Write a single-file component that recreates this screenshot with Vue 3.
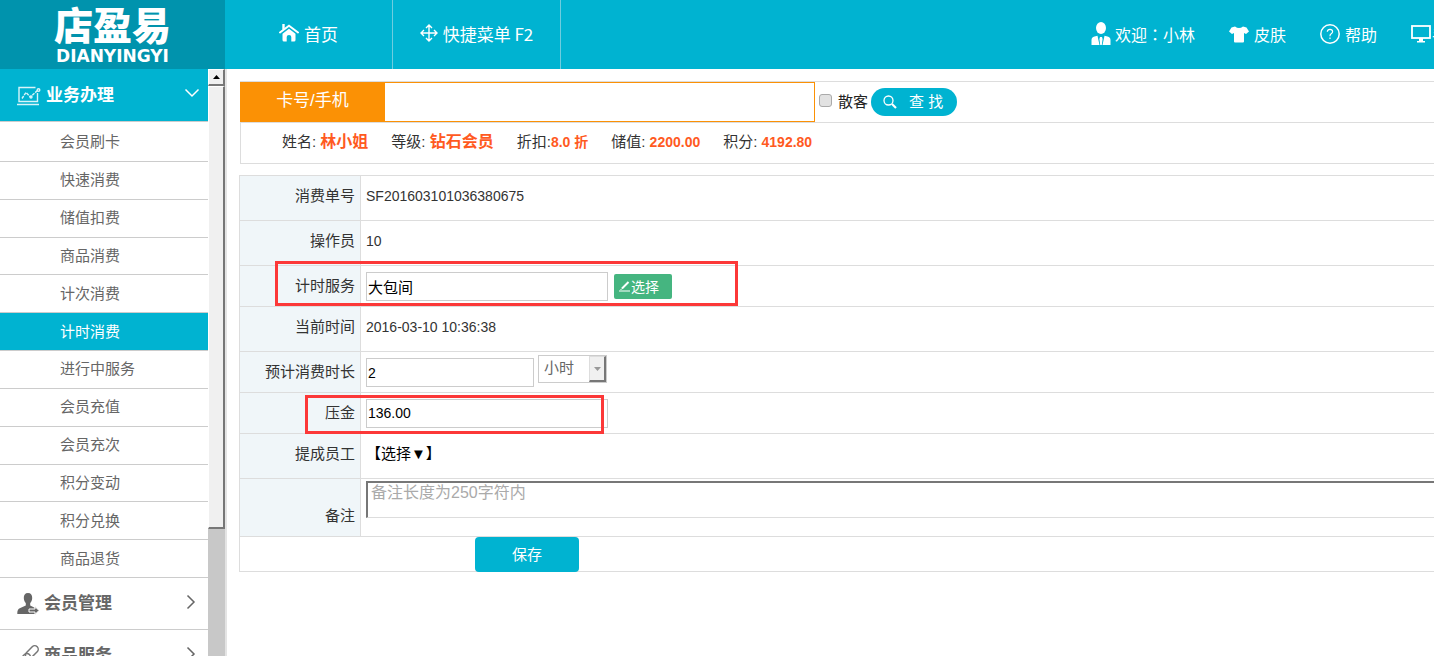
<script setup>
import { ref } from 'vue'

const menu = ['会员刷卡', '快速消费', '储值扣费', '商品消费', '计次消费', '计时消费', '进行中服务', '会员充值', '会员充次', '积分变动', '积分兑换', '商品退货']
const active = ref('计时消费')
const member = [
  { label: '姓名: ', value: '林小姐', name: true },
  { label: '等级: ', value: '钻石会员', name: true },
  { label: '折扣:', value: '8.0 折' },
  { label: '储值: ', value: '2200.00' },
  { label: '积分: ', value: '4192.80' },
]
const card = ref('')
const guest = ref(false)
const service = ref('大包间')
const duration = ref('2')
const unit = ref('小时')
const deposit = ref('136.00')
const remark = ref('')
</script>

<template>
  <div class="app">
    <header class="top">
      <a class="logo" href="#">
        <span class="logo-cn">店盈易</span>
        <span class="logo-en">DIANYINGYI</span>
      </a>
      <nav class="tabs">
        <a href="#" class="tab">
          <svg width="20" height="18" viewBox="0 0 20 18">
            <path d="M1 8.5 10 1.7l9 6.8" fill="none" stroke="#fff" stroke-width="2" stroke-linecap="round" />
            <path d="M3.3 0h2.4v4.2L3.3 6z" fill="#fff" />
            <path d="M3.5 9.7 10 4.8l6.5 4.9V16q0 1.5-1.5 1.5H12.300V13q0-2-2.300-2t-2.300 2V17.500H5q-1.500 0-1.500-1.500z" fill="#fff" />
          </svg>
          <span>首页</span>
        </a>
        <a href="#" class="tab">
          <svg width="18" height="18" viewBox="0 0 18 18" fill="none" stroke="#fff" stroke-width="1.400">
            <path d="M9 1v16M1 9h16M6 4l3-3 3 3M6 14l3 3 3-3M4 6 1 9l3 3M14 6l3 3-3 3" />
          </svg>
          <span>快捷菜单 F2</span>
        </a>
      </nav>
      <nav class="tools">
        <a href="#" class="tool user">
          <svg width="20" height="24" viewBox="0 0 20 24" fill="#fff">
            <ellipse cx="10" cy="6" rx="5" ry="6" />
            <path d="M0.500 23v-5q0-3 3-3.500l3-.7 2 9.200zM19.500 23v-5q0-3-3-3.500l-3-.7-2 9.200zM9 15h2l.6 2-.8 6H9.200l-.8-6z" />
          </svg>
          <span>欢迎<span class="colon">：</span>小林</span>
        </a>
        <a href="#" class="tool skin">
          <svg width="20" height="17" viewBox="0 0 20 17" fill="#fff">
            <path d="M6 .5q4 3 8 0l3.500 1L20 5.500 17 8l-2-1v8.500q0 1-1 1H6q-1 0-1-1V7L3 8 0 5.500l2.500-4z" />
          </svg>
          <span>皮肤</span>
        </a>
        <a href="#" class="tool help">
          <svg width="20" height="20" viewBox="0 0 20 20" fill="none" stroke="#fff">
            <circle cx="10" cy="10" r="9.200" stroke-width="1.500" />
            <path d="M7.300 7.800q.2-2.500 2.700-2.500t2.600 2.200q0 1.300-1.400 2.200T10 12.200M10 13.600v1.400" stroke-width="1.200" />
          </svg>
          <span>帮助</span>
        </a>
        <a href="#" class="tool screen">
          <svg width="20" height="18" viewBox="0 0 20 18">
            <rect x="1" y="1" width="18" height="12" fill="none" stroke="#fff" stroke-width="1.800" />
            <path d="M8 13h4v3h2v1.500H6V16h2z" fill="#fff" />
          </svg>
          <span>手机版</span>
        </a>
      </nav>
    </header>

    <div class="body">
      <aside class="side">
        <div class="side-content">
          <button class="group open" type="button">
            <svg class="laptop" width="24" height="20" viewBox="0 0 24 20" fill="none" stroke="#d8f4f9" stroke-width="1.400">
              <path d="M18.500 1.500H2v14h18.500V7M0 18.500h22" />
              <path d="m5 12.500 4-6 4.500 4.500L21 4" stroke-dasharray="3 1" />
              <circle cx="21.500" cy="4" r="1.300" /><circle cx="14" cy="11" r="1" />
            </svg>
            <span>业务办理</span>
            <svg class="arrow" width="16" height="10" viewBox="0 0 16 10"><path d="m1.500 1.500 6.500 6.500 6.500-6.500" fill="none" stroke="#fff" stroke-width="1.500" /></svg>
          </button>
          <ul class="items">
            <li v-for="m in menu" :key="m">
              <a href="#" :class="{ active: m === active }" @click.prevent="active = m">{{ m }}</a>
            </li>
          </ul>
          <button class="group" type="button">
            <svg width="22" height="22" viewBox="0 0 22 22" fill="#666">
              <path d="M11 0c3 0 4.300 2 4.200 5-.1 2.500-1 4-2 5v2.500l5 2.500v6H.3q-.3-5 3-6l5.500-2.500V10c-1-1-1.900-2.500-2-5C6.700 2 8 0 11 0z" />
              <path d="M12 16h6v-2.500l4 4-4 4V19h-6z" stroke="#fff" stroke-width="1" />
            </svg>
            <span>会员管理</span>
            <svg class="arrow" width="10" height="16" viewBox="0 0 10 16"><path d="m1.500 1.500 6.500 6.500-6.500 6.500" fill="none" stroke="#666" stroke-width="1.500" /></svg>
          </button>
          <button class="group" type="button">
            <svg width="22" height="22" viewBox="0 0 22 22" fill="none" stroke="#777" stroke-width="1.500">
              <g transform="rotate(-45 11 11)">
                <rect x="9" y="7.500" width="15" height="7" rx="3.500" />
                <rect x="-2" y="7.500" width="15" height="7" rx="3.500" />
              </g>
            </svg>
            <span>商品服务</span>
            <svg class="arrow" width="10" height="16" viewBox="0 0 10 16"><path d="m1.500 1.500 6.500 6.500-6.500 6.500" fill="none" stroke="#666" stroke-width="1.500" /></svg>
          </button>
        </div>
        <div class="scroll">
          <button class="scroll-up" type="button" aria-label="向上"><svg width="7" height="4" viewBox="0 0 7 4"><path d="M0 4 3.500 0 7 4z" /></svg></button>
          <div class="thumb"></div>
        </div>
      </aside>

      <main class="main">
        <section class="search">
          <div class="search-row">
            <label class="card-label" for="card">卡号/手机</label>
            <input id="card" v-model="card" class="card-input" type="text">
            <input id="guest" v-model="guest" class="check" type="checkbox">
            <label class="guest" for="guest">散客</label>
            <button class="find" type="button">
              <svg width="14" height="14" viewBox="0 0 14 14" fill="none" stroke="#fff">
                <circle cx="5.500" cy="5.500" r="4.500" stroke-width="1.300" />
                <path d="m9 9 4 4" stroke-width="2.200" />
              </svg>
              <span>查 找</span>
            </button>
          </div>
          <div class="member">
            <span v-for="f in member" :key="f.label">{{ f.label }}<b :class="{ name: f.name }">{{ f.value }}</b></span>
          </div>
        </section>

        <form class="bill" @submit.prevent>
          <table>
            <tbody>
              <tr class="text-row"><th>消费单号</th><td>SF201603101036380675</td></tr>
              <tr class="text-row"><th>操作员</th><td>10</td></tr>
              <tr class="input-row">
                <th><label for="service">计时服务</label></th>
                <td>
                  <div class="line">
                    <input id="service" v-model="service" class="box wide" type="text">
                    <button class="pick" type="button">
                      <svg width="12" height="12" viewBox="0 0 12 12" stroke="#fff" fill="none">
                        <path d="M0 11h11" /><path d="m3 8.500 6.500-6.500" stroke-width="2" /><path d="m1.500 10 1.500-1.500" />
                      </svg>
                      <span>选择</span>
                    </button>
                  </div>
                </td>
              </tr>
              <tr class="text-row"><th>当前时间</th><td>2016-03-10 10:36:38</td></tr>
              <tr class="input-row">
                <th><label for="duration">预计消费时长</label></th>
                <td>
                  <div class="line time">
                    <input id="duration" v-model="duration" class="box number" type="text">
                    <div class="unit">
                      <select v-model="unit" aria-label="时长单位"><option>小时</option></select>
                      <span class="drop"><svg width="7" height="4" viewBox="0 0 7 4"><path d="M0 0h7L3.500 4z" fill="#999" /></svg></span>
                    </div>
                  </div>
                </td>
              </tr>
              <tr class="input-row">
                <th><label for="deposit">压金</label></th>
                <td><div class="line"><input id="deposit" v-model="deposit" class="box wide number" type="text"></div></td>
              </tr>
              <tr class="text-row staff-row"><th>提成员工</th><td><button class="staff" type="button">【选择▼】</button></td></tr>
              <tr class="remark-row">
                <th><label for="remark">备注</label></th>
                <td><textarea id="remark" v-model="remark" placeholder="备注长度为250字符内"></textarea></td>
              </tr>
              <tr class="save-row"><td colspan="2"><button class="save" type="submit">保存</button></td></tr>
            </tbody>
          </table>
          <div class="mark mark-service"></div>
          <div class="mark mark-deposit"></div>
        </form>
      </main>
    </div>
  </div>
</template>

<style>
html, body { overflow: hidden; background: #fff; }
</style>

<style scoped>
.app {
  height: 100vh;
  display: flex;
  flex-direction: column;
  overflow: hidden;
  font-family: "Liberation Sans", "Noto Sans CJK SC", sans-serif;
  font-size: 15px;
  color: #333;
}
.app * { box-sizing: border-box; }
a { text-decoration: none; color: inherit; }
button, input, select, textarea { font-family: inherit; margin: 0; padding: 0; }
svg { display: block; flex: none; }

.top { flex: none; height: 69px; display: flex; background: #00b3d1; color: #fff; overflow: hidden; }
.logo { width: 225px; flex: none; display: flex; flex-direction: column; align-items: center; padding-top: 8px; background: #0093ad; font-weight: 900; }
.logo-cn { font-size: 39px; line-height: 38px; }
.logo-en { font-family: "DejaVu Sans", sans-serif; font-weight: 700; font-size: 17px; line-height: 20px; }
.tabs { display: flex; }
.tab { width: 168px; display: flex; align-items: center; justify-content: center; gap: 5px; border-right: 1px solid #6fcddf; padding-bottom: 3px; font-family: "Noto Sans CJK SC", sans-serif; font-size: 17px; white-space: nowrap; }
.tools { margin-left: auto; margin-right: -46px; padding-bottom: 1px; display: flex; align-items: center; font-family: "Noto Sans CJK SC", sans-serif; font-size: 16px; white-space: nowrap; }
.colon { font-family: "Noto Sans CJK TC", sans-serif; }
.tool { display: flex; align-items: center; gap: 5px; margin-left: 34px; }
.tool.user { gap: 4px; }
.tool.screen { gap: 1px; }

.body { flex: 1; min-height: 0; display: flex; }
.side { flex: none; width: 227px; display: flex; border-right: 2px solid #e4e4e4; overflow: hidden; }
.side-content { flex: 1; }
.group { width: 100%; height: 52px; display: flex; align-items: center; gap: 5px; padding: 0 12px 0 17px; border: 0; border-bottom: 1px solid #ccc; background: #fff; color: #666; font-family: "Noto Sans CJK SC", sans-serif; font-size: 17px; font-weight: 700; }
.group.open { height: 53px; background: #00b3d1; color: #fff; padding-right: 8px; }
.group span, .group .arrow { margin-bottom: 4px; }
.group .laptop { margin-top: 2px; }
.group .arrow { margin-left: auto; }
.items { list-style: none; margin: 0; padding: 0; height: 456px; display: grid; grid-template-rows: 40px repeat(11, 1fr); }
.items li { display: flex; border-bottom: 1px solid #ccc; }
.items a { flex: 1; display: flex; align-items: center; padding: 0 0 3px 60px; font-family: "Noto Sans CJK SC", sans-serif; color: #666; }
.items a.active { background: #00b3d1; color: #fff; }
.scroll { flex: none; width: 17px; display: flex; flex-direction: column; background: #c8c8c8; }
.scroll-up, .thumb { background: #f0f0f0; border: 1px solid #fff; border-right: 2px solid #777; border-bottom: 2px solid #777; }
.scroll-up { height: 17px; display: flex; align-items: center; justify-content: center; }
.thumb { height: 443px; }

.main { flex: 1; min-width: 0; padding: 12px 0 0 12px; overflow: hidden; }
.search { margin: 0 -20px 0 1px; border: 1px solid #ddd; }
.search-row { height: 41px; margin-left: -1px; display: flex; align-items: center; border-bottom: 1px solid #ddd; }
.card-label { width: 145px; height: 40px; line-height: 38px; text-align: center; background: #fb9105; color: #fff; font-size: 17px; }
.card-input { width: 430px; height: 40px; border: 1px solid #fb9105; border-left: 0; outline: 0; padding: 0 8px; font-size: 16px; }
.check { width: 13px; height: 13px; margin: 0 6px 4px 4px; appearance: none; border: 1px solid #aaa; border-radius: 3px; background: #e2e2e2; }
.check:checked { background: #00b3d1; }
.guest { color: #222; padding-bottom: 4px; }
.find { margin-left: 3px; width: 86px; height: 28px; display: flex; align-items: center; gap: 12px; padding-left: 12px; border: 0; border-radius: 14px; background: #00b3d1; color: #fff; font-size: 15px; }
.find span { padding-bottom: 3px; }
.member { height: 40px; display: flex; align-items: baseline; gap: 23px; padding: 8px 0 0 41px; line-height: 22px; white-space: pre; color: #333; }
.member b { color: #ff5a1f; font-size: 14px; }
.member .name { font-size: 16px; }

.bill { position: relative; margin: 11px -20px 0 0; }
table { width: 100%; border-collapse: separate; border-spacing: 0; border-top: 1px solid #ddd; border-left: 1px solid #ddd; table-layout: fixed; }
th, td { padding: 0 5px; border-bottom: 1px solid #ddd; text-align: left; font-weight: 400; }
th { width: 121px; background: #f0f6f9; border-right: 1px solid #ddd; text-align: right; }
td { font-size: 14px; }
.text-row > * { height: 45px; padding-bottom: 4px; }
.text-row th, .staff-row td { padding-bottom: 8px; }
.input-row > * { height: 41px; }
.input-row th { padding-bottom: 4px; }
.line { display: flex; align-items: center; }
.box { width: 168px; height: 29px; border: 1px solid #ccc; padding: 0 1px; font-size: 15px; color: #000; outline: 0; }
.box.wide { width: 242px; }
.box.number { font-size: 14px; }
.pick { margin-left: 6px; width: 58px; height: 25px; display: flex; align-items: center; padding-left: 5px; border: 0; border-radius: 2px; background: #45b580; color: #fff; font-size: 14px; }
.time { align-items: flex-end; padding-bottom: 2px; }
.unit { position: relative; width: 69px; height: 28px; margin: 0 0 4px 4px; }
.unit select { width: 100%; height: 100%; appearance: none; border: 1px solid #ccc; padding: 0 0 3px 5px; background: #fff; color: #666; font-size: 15px; }
.drop { position: absolute; top: 1px; right: 1px; bottom: 1px; width: 17px; display: flex; align-items: center; justify-content: center; background: #f0f0f0; border: 1px solid #ddd; border-right: 2px solid #777; border-bottom: 2px solid #777; pointer-events: none; }
.staff { border: 0; background: none; font-size: 15px; color: #000; }
.remark-row > * { height: 58px; }
.remark-row th { vertical-align: bottom; padding-bottom: 11px; }
.remark-row td { vertical-align: top; padding-top: 2px; }
textarea { display: block; width: 100%; height: 37px; resize: none; border: 1px solid #ddd; border-top: 2px solid #777; border-left: 2px solid #777; padding: 0 3px; font-size: 16px; line-height: 20px; }
textarea::placeholder { color: #aaa; }
.save-row td { height: 35px; padding: 0; }
.save { display: block; margin: 0 0 -1px 235px; width: 104px; height: 35px; padding-bottom: 2px; border: 0; border-radius: 4px; background: #00b3d1; color: #fff; font-size: 15px; }
.mark { position: absolute; border: 3px solid #fc3838; pointer-events: none; }
.mark-service { left: 36px; top: 86px; width: 463px; height: 45px; }
.mark-deposit { left: 66px; top: 220px; width: 299px; height: 39px; }
</style>
